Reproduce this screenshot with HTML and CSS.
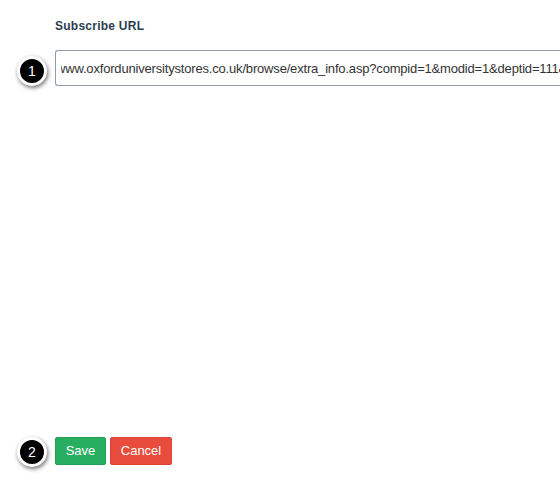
FILE: index.html
```html
<!DOCTYPE html>
<html>
<head>
<meta charset="utf-8">
<link rel="stylesheet" href="styles.css">
</head>
<body>
<div class="page">
  <div class="field">
    <label class="label">Subscribe URL</label>
    <div class="input-wrap">
      <div class="input"><div class="input-clip"><span class="input-text">www.oxforduniversitystores.co.uk/browse/extra_info.asp?compid=1&amp;modid=1&amp;deptid=111&amp;catid=1</span></div></div>
      <span class="badge badge-1">1</span>
    </div>
  </div>
  <div class="actions">
    <button class="btn btn-save">Save</button>
    <button class="btn btn-cancel">Cancel</button>
    <span class="badge badge-2">2</span>
  </div>
</div>
</body>
</html>
```

FILE: styles.css
```css
html, body {
  margin: 0;
  padding: 0;
  background: #ffffff;
  overflow: hidden;
}
.page {
  height: 483px;
  box-sizing: border-box;
  padding: 19px 0 18px 55px;
  display: flex;
  flex-direction: column;
  font-family: "Liberation Sans", Arial, sans-serif;
}
.field {
  display: flex;
  flex-direction: column;
}
.label {
  font-size: 12px;
  font-weight: bold;
  color: #2c3e50;
  line-height: 14px;
  letter-spacing: 0.25px;
  margin-bottom: 17px;
}
.input-wrap {
  position: relative;
}
.input {
  width: 520px;
  height: 36px;
  box-sizing: border-box;
  border: 1px solid #8f9aaa;
  border-right: none;
  border-radius: 3px 0 0 3px;
  padding-left: 5px;
  display: flex;
  align-items: center;
  font-size: 13px;
  color: #333333;
  background: #fff;
}
.input-clip {
  flex: 1;
  overflow: hidden;
  white-space: nowrap;
}
.input-text {
  display: inline-block;
  margin-left: -5px;
  letter-spacing: -0.18px;
}
.actions {
  margin-top: auto;
  display: flex;
  gap: 4px;
  position: relative;
}
.btn {
  font-family: "Liberation Sans", Arial, sans-serif;
  font-size: 13px;
  color: #ffffff;
  border: 1px solid transparent;
  border-radius: 2px;
  height: 28px;
  padding: 0;
  line-height: 26px;
  text-align: center;
}
.btn-save {
  background: #27ae60;
  border-color: #23a057;
  width: 51px;
}
.btn-cancel {
  background: #e74c3c;
  border-color: #dd4334;
  width: 62px;
}
.badge {
  position: absolute;
  left: -38px;
  width: 24px;
  height: 24px;
  border-radius: 50%;
  background: #000;
  color: #fff;
  border: 3px solid #fff;
  box-shadow: 1px 2px 4px rgba(0,0,0,0.55);
  font-size: 14px;
  line-height: 24px;
  text-align: center;
  font-family: "Liberation Sans", Arial, sans-serif;
}
.badge-1 {
  top: 6px;
}
.badge-2 {
  top: 0;
}
```
